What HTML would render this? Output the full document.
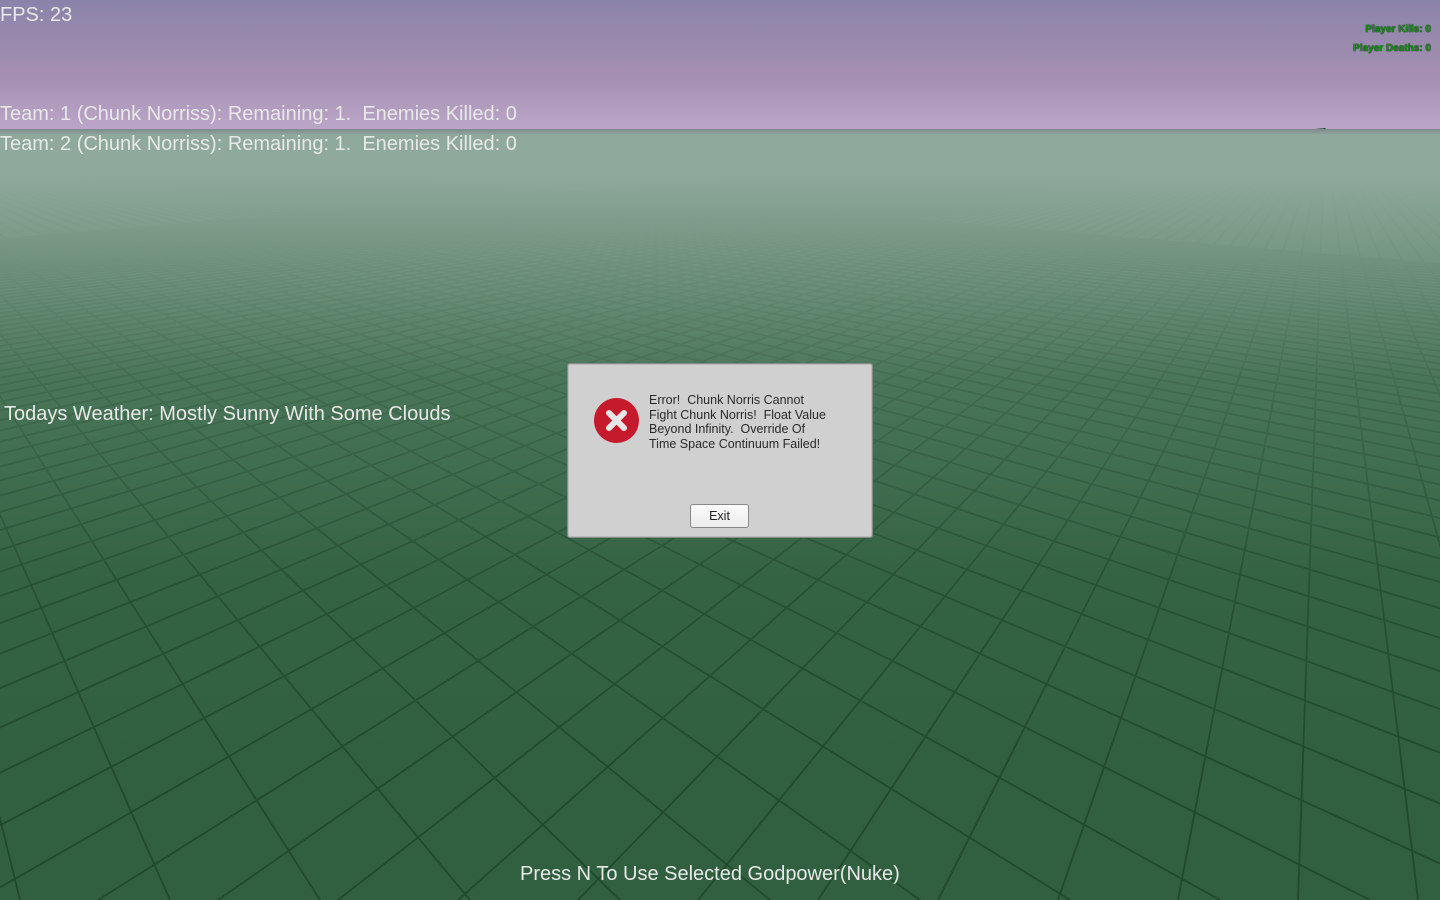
<!DOCTYPE html>
<html><head><meta charset="utf-8"><style>
html,body{margin:0;padding:0;width:1440px;height:900px;overflow:hidden;font-family:"Liberation Sans",sans-serif}
#sky{position:absolute;left:0;top:0;width:1440px;height:130px;background:linear-gradient(#8a83a9,#a690b2 60%,#bba6c9)}
#ground{position:absolute;left:0;top:0;width:1440px;height:900px}
#fog{position:absolute;left:0;top:129px;width:1440px;height:771px;background:linear-gradient(#7f8a8f 0px,#8fa99c 6px,#8fa99c 45px,rgba(135,165,148,.85) 110px,rgba(95,135,110,.55) 250px,rgba(65,110,82,.22) 450px,rgba(50,95,68,0) 650px)}
.t{position:absolute;color:#e8e8e8;font-size:20px;white-space:pre;line-height:24px}
.g{position:absolute;right:9px;font-size:10px;color:#1e8a1e;font-weight:bold;text-shadow:0 0 1px #003300,0 0 1px #003300}
#dlg{position:absolute;left:567px;top:363px;width:304px;height:173px;background:#d0d0d0;border:1px solid #888;border-radius:3px;box-shadow:0 0 0 1px #bbb inset}
#dlg .msg{position:absolute;left:81px;top:29px;font-size:12.5px;line-height:14.6px;color:#2a2a2a;white-space:pre}
#icon{position:absolute;left:26px;top:34px;width:45px;height:45px;border-radius:50%;background:#c41a2c}
#btn{position:absolute;left:122px;top:140px;width:57px;height:22px;border:1px solid #888;border-radius:3px;background:linear-gradient(#fbfbfb,#ececec);font-size:12.5px;text-align:center;line-height:22px;color:#222}
</style></head><body>
<div id="sky"></div>
<svg id="ground" width="1440" height="900" viewBox="0 0 1440 900">
<rect x="0" y="129" width="1440" height="771" fill="#30603f"/>
<path fill="none" stroke="#1f4a2c" stroke-width="1.8" d="M-170 129L20 900M-170 129L170 900M-170 129L320 900M-170 129L470 900M-170 129L620 900M-170 129L770 900M-170 129L920 900M-170 129L1070 900M-170 129L1220 900M-170 129L1370 900M-170 129L1520 900M-170 129L1670 900M-170 129L1820 900M-170 129L1970 900M-170 129L2120 900M-170 129L2270 900M-170 129L2420 900M-170 129L2570 900M-170 129L2720 900M-170 129L2870 900M-170 129L3020 900M-170 129L3170 900M-170 129L3320 900M-170 129L3470 900M-170 129L3620 900M-170 129L3770 900M-170 129L3920 900M-170 129L4070 900M-170 129L4220 900M-170 129L4370 900M-170 129L4520 900M-170 129L4670 900M-170 129L4820 900M-170 129L4970 900M-170 129L5120 900M-170 129L5270 900M-170 129L5420 900M-170 129L5570 900M-170 129L5720 900M-170 129L5870 900M-170 129L6020 900M-170 129L6170 900M-170 129L6320 900M-170 129L6470 900M-170 129L6620 900M-170 129L6770 900M-170 129L6920 900M-170 129L7070 900M-170 129L7220 900M-170 129L7370 900M-170 129L7520 900M-170 129L7670 900M-170 129L7820 900M-170 129L7970 900M-170 129L8120 900M-170 129L8270 900M-170 129L8420 900M-170 129L8570 900M-170 129L8720 900M-170 129L8870 900M-170 129L9020 900
M1325 129L2258 900M1325 129L2138 900M1325 129L2018 900M1325 129L1898 900M1325 129L1778 900M1325 129L1658 900M1325 129L1538 900M1325 129L1418 900M1325 129L1298 900M1325 129L1178 900M1325 129L1058 900M1325 129L938 900M1325 129L818 900M1325 129L698 900M1325 129L578 900M1325 129L458 900M1325 129L338 900M1325 129L218 900M1325 129L98 900M1325 129L-22 900M1325 129L-142 900M1325 129L-262 900M1325 129L-382 900M1325 129L-502 900M1325 129L-622 900M1325 129L-742 900M1325 129L-862 900M1325 129L-982 900M1325 129L-1102 900M1325 129L-1222 900M1325 129L-1342 900M1325 129L-1462 900M1325 129L-1582 900M1325 129L-1702 900M1325 129L-1822 900M1325 129L-1942 900M1325 129L-2062 900M1325 129L-2182 900M1325 129L-2302 900M1325 129L-2422 900M1325 129L-2542 900M1325 129L-2662 900M1325 129L-2782 900M1325 129L-2902 900M1325 129L-3022 900M1325 129L-3142 900M1325 129L-3262 900M1325 129L-3382 900M1325 129L-3502 900M1325 129L-3622 900M1325 129L-3742 900M1325 129L-3862 900M1325 129L-3982 900M1325 129L-4102 900M1325 129L-4222 900M1325 129L-4342 900M1325 129L-4462 900M1325 129L-4582 900M1325 129L-4702 900M1325 129L-4822 900M1325 129L-4942 900M1325 129L-5062 900M1325 129L-5182 900M1325 129L-5302 900M1325 129L-5422 900M1325 129L-5542 900M1325 129L-5662 900M1325 129L-5782 900M1325 129L-5902 900M1325 129L-6022 900M1325 129L-6142 900M1325 129L-6262 900M1325 129L-6382 900M1325 129L-6502 900M1325 129L-6622 900M1325 129L-6742 900M1325 129L-6862 900M1325 129L-6982 900M1325 129L-7102 900M1325 129L-7222 900M1325 129L-7342 900M1325 129L-7462 900M1325 129L-7582 900M1325 129L-7702 900M1325 129L-7822 900M1325 129L-7942 900"/>
</svg>
<div id="fog"></div>
<div class="t" style="left:0;top:3px">FPS: 23</div>
<div class="t" style="left:0;top:102px">Team: 1 (Chunk Norriss): Remaining: 1.  Enemies Killed: 0</div>
<div class="t" style="left:0;top:132px">Team: 2 (Chunk Norriss): Remaining: 1.  Enemies Killed: 0</div>
<div class="t" style="left:4px;top:402px">Todays Weather: Mostly Sunny With Some Clouds</div>
<div class="t" style="left:520px;top:862px">Press N To Use Selected Godpower(Nuke)</div>
<div class="g" style="top:24px">Player Kills: 0</div>
<div class="g" style="top:43px">Player Deaths: 0</div>
<div id="dlg">
<div id="icon"><svg width="45" height="45" viewBox="0 0 45 45"><path d="M15 15L30 30M30 15L15 30" stroke="#e6e6e6" stroke-width="6" stroke-linecap="round"/></svg></div>
<div class="msg">Error!  Chunk Norris Cannot
Fight Chunk Norris!  Float Value
Beyond Infinity.  Override Of
Time Space Continuum Failed!</div>
<div id="btn">Exit</div>
</div>
</body></html>
